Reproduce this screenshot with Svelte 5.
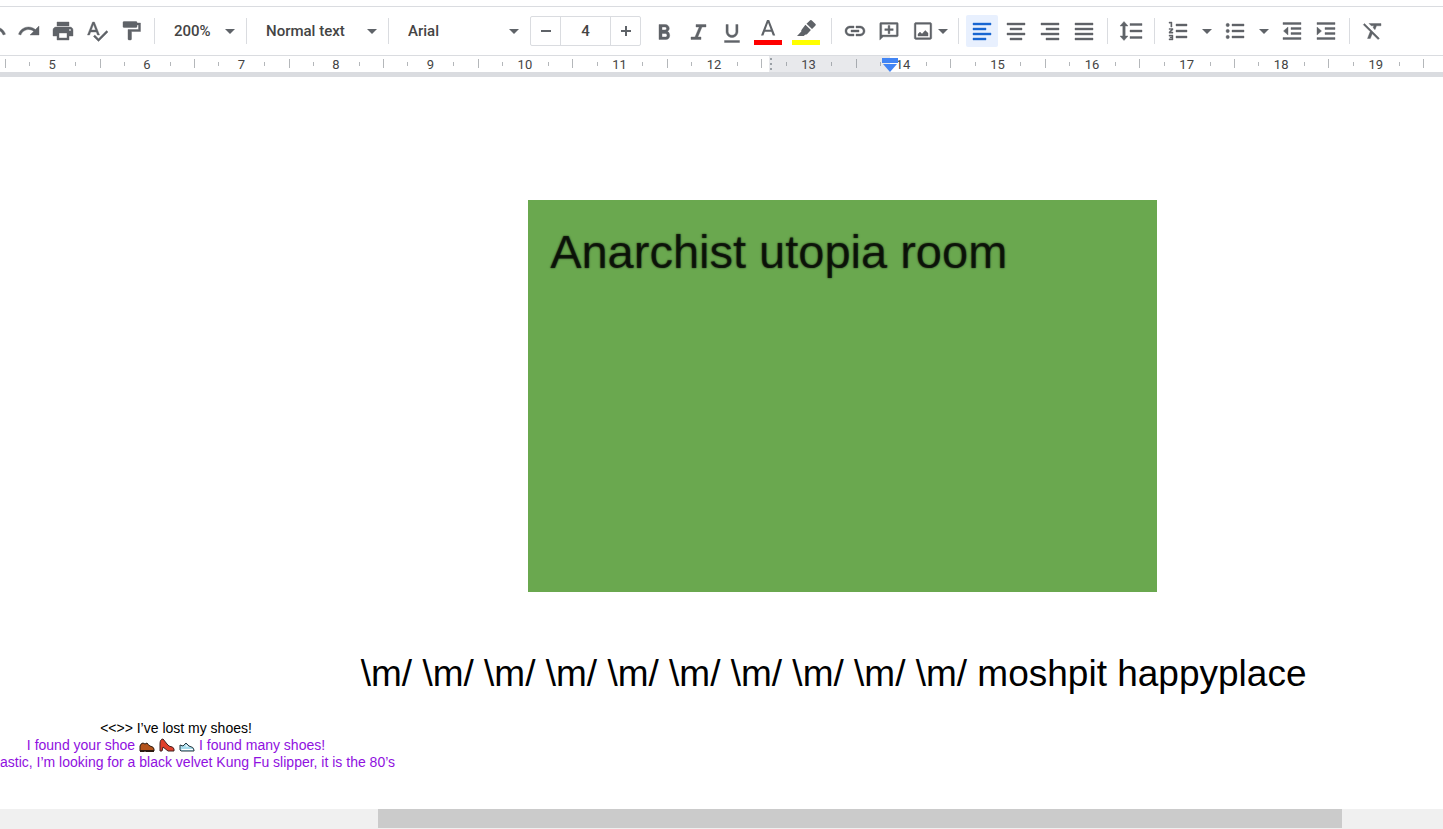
<script>
  let zoom = "200%";
  let paragraph = "Normal text";
  let font = "Arial";
  let fontSize = 4;
  let align = "left";

  const marks = Array.from({ length: 15 }, (_, i) => i + 5);
  const horns = Array(10).fill("\\m/").join(" ");

  const history = [
    { name: "Undo", path: "M12.5 8c-2.65 0-5.05.99-6.9 2.6L2 7v9h9l-3.62-3.62c1.39-1.16 3.16-1.88 5.12-1.88 3.54 0 6.55 2.31 7.6 5.5l2.37-.78C21.08 11.03 17.15 8 12.5 8z" },
    { name: "Redo", path: "M18.4 10.6C16.55 8.99 14.15 8 11.5 8c-4.65 0-8.58 3.03-9.96 7.22L3.9 16c1.05-3.19 4.05-5.5 7.6-5.5 1.95 0 3.73.72 5.12 1.88L13 16h9V7l-3.6 3.6z" },
    { name: "Print", path: "M19 8H5c-1.66 0-3 1.34-3 3v6h4v4h12v-4h4v-6c0-1.66-1.34-3-3-3zm-3 11H8v-5h8v5zm3-7c-.55 0-1-.45-1-1s.45-1 1-1 1 .45 1 1-.45 1-1 1zm-1-9H6v4h12V3z" },
    { name: "Spelling and grammar check", path: "M12.45 16h2.09L9.43 3H7.57L2.46 16h2.09l1.12-3h5.64l1.14 3zm-6.02-5L8.5 5.48 10.57 11H6.43zm15.16.59l-8.09 8.09L9.83 16l-1.41 1.41 5.09 5.09L23 13l-1.41-1.41z" },
    { name: "Paint format", path: "M18 4v-.5c0-.55-.45-1-1-1H5c-.55 0-1 .45-1 1v4c0 .55.45 1 1 1h12c.55 0 1-.45 1-1V6h1.5v4.500H9V20c0 .55.45 1 1 1h1.500c.55 0 1-.45 1-1v-7.500h9V4H18z" },
  ];
  const emphasis = [
    { name: "Bold", path: "M15.6 12.3c1-.7 1.7-1.8 1.7-2.8 0-2.3-1.8-4-4-4H7v15h7c2.100 0 3.700-1.700 3.700-3.800 0-1.800-.8-3.600-2.100-4.400zM10 8h3c.83 0 1.500.67 1.500 1.500S13.830 11 13 11h-3V8zm3.500 10H10v-3.500h3.500c.83 0 1.500.8 1.500 1.700S14.330 18 13.500 18z" },
    { name: "Italic", path: "M10 5.500V8h3.200L9 18H5v2.500h10V18h-3.200L16 8h4V5.500H10z" },
    { name: "Underline", path: "M12 18.500c3.310 0 6-2.690 6-6v-7h-2.200v7.200c0 2-1.700 3.600-3.800 3.600s-3.800-1.600-3.800-3.600V5.500H6v7c0 3.310 2.690 6 6 6zm-7.500 3v2h15v-2h-15z" },
  ];
  const inserts = [
    { name: "Insert link", path: "M3.900 12c0-1.710 1.390-3.100 3.100-3.100h4V7H7c-2.760 0-5 2.240-5 5s2.240 5 5 5h4v-1.900H7c-1.710 0-3.100-1.390-3.100-3.100zM8 13h8v-2H8v2zm9-6h-4v1.900h4c1.710 0 3.100 1.390 3.100 3.100s-1.390 3.100-3.100 3.100h-4V17h4c2.760 0 5-2.240 5-5s-2.240-5-5-5z" },
    { name: "Add comment", path: "M4 3.500c-.8 0-1.200.5-1.200 1.200V21l3.400-3.200H20c.8 0 1.200-.5 1.200-1.200V4.700c0-.7-.5-1.200-1.200-1.200H4zm15.400 12.500H4.700V5.300h14.700V16zM11.100 6.500v3.200H7.800v1.800h3.300v3.200h1.800v-3.200h3.300V9.700h-3.300V6.500h-1.800z" },
  ];
  const alignments = [
    { name: "left", path: "M3 4h18v2H3zM3 9h13v2H3zM3 14h18v2H3zM3 19h13v2H3z" },
    { name: "center", path: "M3 4h18v2H3zM6 9h12v2H6zM3 14h18v2H3zM6 19h12v2H6z" },
    { name: "right", path: "M3 4h18v2H3zM8 9h13v2H8zM3 14h18v2H3zM8 19h13v2H8z" },
    { name: "justify", path: "M3 4h18v2H3zM3 9h18v2H3zM3 14h18v2H3zM3 19h18v2H3z" },
  ];
  const lists = [
    { name: "Numbered list", path: "M10 5h11v2H10zM10 11h11v2H10zM10 17h11v2H10zM3 3h3v5H4.800V4.200H3zM3 9.500h4v1.200L4.800 13H7v1.200H3V13l2.200-2.400H3zM3 16h4v5H3v-1.200h2.800V19H4v-1h1.800v-.8H3z" },
    { name: "Bulleted list", path: "M9 5h12v2H9zM9 11h12v2H9zM9 17h12v2H9zM3 6a1.700 1.700 0 1 0 3.400 0A1.700 1.700 0 1 0 3 6zM3 12a1.700 1.700 0 1 0 3.400 0A1.700 1.700 0 1 0 3 12zM3 18a1.700 1.700 0 1 0 3.400 0A1.700 1.700 0 1 0 3 18z" },
  ];
  const indents = [
    { name: "Decrease indent", path: "M3 3.500h18v2H3zM11 8.500h10v2H11zM11 13.500h10v2H11zM3 18.500h18v2H3zM8 8v8l-4.500-4z" },
    { name: "Increase indent", path: "M3 3.500h18v2H3zM11 8.500h10v2H11zM11 13.500h10v2H11zM3 18.500h18v2H3zM3 8v8l4.500-4z" },
  ];
  const lineSpacing = {
    name: "Line spacing",
    path: "M11 4.500h12v2H11zM11 11h12v2H11zM11 17.500h12v2H11zM5 2.500 9 7H6.200v10H9l-4 4.500L1 17h2.800V7H1z",
  };
  const clear = {
    name: "Clear formatting",
    path: "M3.500 4.500 2.300 5.700l6.900 6.900L6.500 19.500h2.800l1.900-4.800 5.900 5.900 1.300-1.300zM8 4.500l2.300 2.300h2.600l-.8 2 1.900 1.900 1.500-3.900H20V4.500z",
  };
</script>

{#snippet icon(path)}
  <svg class="icon" viewBox="0 0 24 24" aria-hidden="true"><path d={path} /></svg>
{/snippet}

{#snippet caret()}
  <svg class="caret" viewBox="0 0 10 5" aria-hidden="true"><path d="M0 0h10L5 5z" /></svg>
{/snippet}

{#snippet tool(item)}
  <button class="tool" aria-label={item.name}>{@render icon(item.path)}</button>
{/snippet}

<div class="app">
  <header>
    <div class="toolbar">
      <div class="group history">
        {#each history as item}{@render tool(item)}{/each}
      </div>
      <label class="picker zoom">
        <select aria-label="Zoom" bind:value={zoom}>
          <option>100%</option>
          <option>200%</option>
        </select>
        {@render caret()}
      </label>
      <label class="picker">
        <select aria-label="Styles" bind:value={paragraph}>
          <option>Normal text</option>
          <option>Title</option>
        </select>
        {@render caret()}
      </label>
      <div class="group">
        <label class="picker">
          <select aria-label="Font" bind:value={font}>
            <option>Arial</option>
            <option>Roboto</option>
          </select>
          {@render caret()}
        </label>
        <div class="size">
          <button aria-label="Decrease font size" on:click={() => (fontSize = +fontSize - 1)}>
            <svg viewBox="0 0 12 12"><path d="M1 5h10v2H1z" /></svg>
          </button>
          <input aria-label="Font size" bind:value={fontSize} />
          <button aria-label="Increase font size" on:click={() => (fontSize = +fontSize + 1)}>
            <svg viewBox="0 0 12 12"><path d="M1 5h4V1h2v4h4v2H7v4H5V7H1z" /></svg>
          </button>
        </div>
        {#each emphasis as item}{@render tool(item)}{/each}
        <button class="tool color" aria-label="Text color">
          <svg viewBox="0 0 28 28">
            <path d="M13 3h2.200l6 15.500h-2.400l-1.400-3.800h-6.600l-1.400 3.800H7zm1.100 2.800L11.500 12.700h5.200z" />
            <path fill="#ff0000" d="M0 23h28v5H0z" />
          </svg>
        </button>
        <button class="tool color" aria-label="Highlight color">
          <svg viewBox="0 0 28 28">
            <path d="M18.200 3.300q.7-.7 1.400 0l3.900 3.700q.7.700 0 1.400L20 12.100 14.500 6.800zM13.400 7.800l5.500 5.300-3.700 3.900q-.8.8-1.900.6L11.800 19H5l4.300-4.400q-.4-1.200.5-2.100z" />
            <path fill="#ffff00" d="M0 23h28v5H0z" />
          </svg>
        </button>
      </div>
      <div class="group">
        {#each inserts as item}{@render tool(item)}{/each}
        <button class="tool image" aria-label="Insert image">
          {@render icon("M5 3.500c-1 0-1.700.7-1.700 1.700v13.600c0 1 .7 1.700 1.700 1.700h14c1 0 1.700-.7 1.700-1.700V5.200c0-1-.7-1.700-1.700-1.700H5zm0 1.800h14v13.400H5V5.300zM7 17v-2l2-2 2 2 3.200-3.500L17 14v3z")}
          {@render caret()}
        </button>
      </div>
      <div class="group">
        {#each alignments as item}
          <button
            class="tool"
            class:active={align === item.name}
            aria-label="Align {item.name}"
            on:click={() => (align = item.name)}>{@render icon(item.path)}</button>
        {/each}
      </div>
      <div class="group">
        {@render tool(lineSpacing)}
      </div>
      <div class="group">
        {#each lists as item}
          {@render tool(item)}
          <button class="more" aria-label="{item.name} options">{@render caret()}</button>
        {/each}
        {#each indents as item}{@render tool(item)}{/each}
      </div>
      <div class="group">
        {@render tool(clear)}
      </div>
    </div>
    <div class="ruler">
      {#each marks as mark}
        <div class="mark">{mark}</div>
      {/each}
      <div class="outside"></div>
      <svg class="indent" viewBox="0 0 16 14" aria-hidden="true">
        <path d="M0 0h16v5H0zM1 6h14l-7 8z" />
      </svg>
    </div>
  </header>

  <main>
    <div class="room">Anarchist utopia room</div>
    <p class="moshpit">{horns} moshpit happyplace</p>
    <div class="chat">
      <p>&lt;&lt;&gt;&gt; I’ve lost my shoes!</p>
      <p class="reply shoes">
        I found your shoe
        <svg viewBox="0 0 16 14" role="img" aria-label="brown shoe">
          <path fill="#b5541c" stroke="#2a1a10" d="M1 13V8q1-3 3-3 2 2 4 0 1 2 3 3 4 1 4 3v2z" />
          <path fill="#2a1a10" d="M1 12h14v2H7l-1-1-1 1H1z" />
        </svg>
        <svg viewBox="0 0 16 14" role="img" aria-label="red heel">
          <path fill="#e0402c" stroke="#402020" d="M1 6Q1 1 4 1l4 5 2 2q5 1 5 3v2H9L4 9 3 13H1z" />
        </svg>
        <svg viewBox="0 0 16 14" role="img" aria-label="running shoe">
          <path fill="#a8dcec" stroke="#283840" d="M1 12V7l3 1 3-3 3 3q5 1 5 4v1H2z" />
          <path fill="#ffffff" d="M2 11h12v1H3zM6 8l2-1 1 2z" />
        </svg>
        I found many shoes!
      </p>
      <p class="reply">astic, I’m looking for a black velvet Kung Fu slipper, it is the 80’s</p>
    </div>
  </main>

  <div class="scrollbar"><div class="thumb"></div></div>
</div>

<style>
  .app {
    display: flex;
    flex-direction: column;
    min-height: 100vh;
    overflow: hidden;
    background: #fff;
    font-family: Roboto, sans-serif;
    color: #444;
  }
  header {
    padding-top: 6px;
  }
  .toolbar {
    display: flex;
    align-items: center;
    height: 48px;
    border-top: 1px solid #dadce0;
    border-bottom: 1px solid #dadce0;
  }
  .toolbar > * {
    position: relative;
    flex-shrink: 0;
  }
  .toolbar > * + * {
    margin-left: 13px;
  }
  .toolbar > * + *::before {
    content: "";
    position: absolute;
    top: 50%;
    left: -7px;
    width: 1px;
    height: 26px;
    margin-top: -13px;
    background: #dadce0;
  }
  .group {
    display: flex;
    align-items: center;
  }
  .history {
    margin-left: -22px;
  }
  button {
    display: flex;
    align-items: center;
    justify-content: center;
    padding: 0;
    border: 0;
    background: none;
    cursor: pointer;
  }
  svg {
    display: block;
    fill: #5f6368;
  }
  .icon {
    width: 24px;
    height: 24px;
    stroke: #5f6368;
    stroke-width: 0.4;
  }
  .caret {
    width: 10px;
    height: 5px;
  }
  .tool {
    width: 32px;
    height: 32px;
    margin: 0 1px;
    border-radius: 2px;
  }
  .tool.active {
    background: #e8f0fe;
  }
  .tool.active .icon {
    fill: #1967d2;
    stroke: #1967d2;
  }
  .tool.color {
    width: 36px;
  }
  .color svg {
    width: 28px;
    height: 28px;
  }
  .tool.image {
    gap: 3px;
    width: 44px;
  }
  .more {
    width: 23px;
    height: 32px;
  }
  .picker {
    display: grid;
    align-items: center;
    width: 129px;
    height: 32px;
  }
  .picker.zoom {
    width: 79px;
  }
  .picker select,
  .picker .caret {
    grid-area: 1 / 1;
  }
  .picker .caret {
    justify-self: end;
    margin-right: 5px;
    pointer-events: none;
  }
  .picker select {
    width: 100%;
    padding: 0 0 0 13px;
    border: 0;
    appearance: none;
    background: none;
    font: 500 15px Roboto, sans-serif;
    color: #444;
  }
  .size {
    display: flex;
    height: 30px;
    margin: 0 6px;
    border: 1px solid #dadce0;
    border-radius: 2px;
    box-sizing: border-box;
  }
  .size button {
    width: 29px;
  }
  .size svg {
    width: 12px;
    height: 12px;
  }
  .size input {
    width: 51px;
    padding: 0;
    border: solid #dadce0;
    border-width: 0 1px;
    box-sizing: border-box;
    font: 500 15px Roboto, sans-serif;
    color: #444;
    text-align: center;
  }
  .ruler {
    position: relative;
    display: flex;
    height: 16px;
    padding: 0 20px 0 5px;
    border-bottom: 5px solid #dadce0;
  }
  .mark {
    flex: 1;
    font-size: 13px;
    line-height: 18px;
    text-align: center;
    background:
      linear-gradient(#b4b7ba, #b4b7ba) 0 3px / 1px 9px no-repeat,
      linear-gradient(#b4b7ba, #b4b7ba) 26% 6px / 1px 4px no-repeat,
      linear-gradient(#b4b7ba, #b4b7ba) 75% 6px / 1px 4px no-repeat;
  }
  .ruler::after {
    content: "";
    position: absolute;
    top: 3px;
    right: 19px;
    width: 1px;
    height: 9px;
    background: #b4b7ba;
  }
  /* grey part of the ruler, past the cell edge */
  .outside {
    position: absolute;
    top: 0;
    bottom: 0;
    left: 53.3%;
    width: 8.4%;
    background:
      repeating-linear-gradient(transparent 0 2px, #9aa0a6 2px 4px, transparent 4px 5px) 1px 0 / 2px 100% no-repeat,
      rgba(95, 99, 120, 0.14);
  }
  .indent {
    position: absolute;
    top: 2px;
    left: 61.7%;
    width: 16px;
    height: 14px;
    margin-left: -8px;
    fill: #4285f4;
  }
  main {
    flex: 1;
    padding-top: 123px;
    font-family: "Liberation Sans", Arial, sans-serif;
    color: #000;
  }
  .room {
    width: 43.6%;
    aspect-ratio: 629 / 392;
    margin-left: 36.6%;
    padding: 24px 22px;
    box-sizing: border-box;
    background: #6aa84f;
    font-size: 47px;
    line-height: 56px;
    color: rgba(0, 0, 0, 0.7);
    text-shadow: 0 0 2px rgba(0, 0, 0, 0.7);
  }
  p {
    margin: 0;
    white-space: nowrap;
  }
  .moshpit {
    margin: 60px 0 24px 25%;
    font-size: 37px;
    line-height: 44px;
  }
  .chat {
    width: 352px;
    font-size: 14px;
    line-height: 16px;
    text-align: center;
  }
  .reply {
    color: #9010e0;
  }
  .shoes {
    display: flex;
    align-items: center;
    justify-content: center;
    gap: 4px;
    line-height: 18px;
  }
  .shoes svg {
    width: 16px;
    height: 14px;
  }
  .scrollbar {
    display: flex;
    height: 20px;
    background: #f0f0f0;
  }
  .thumb {
    width: 66.8%;
    height: 19px;
    margin-left: 26.2%;
    background: #cbcbcb;
  }
</style>
